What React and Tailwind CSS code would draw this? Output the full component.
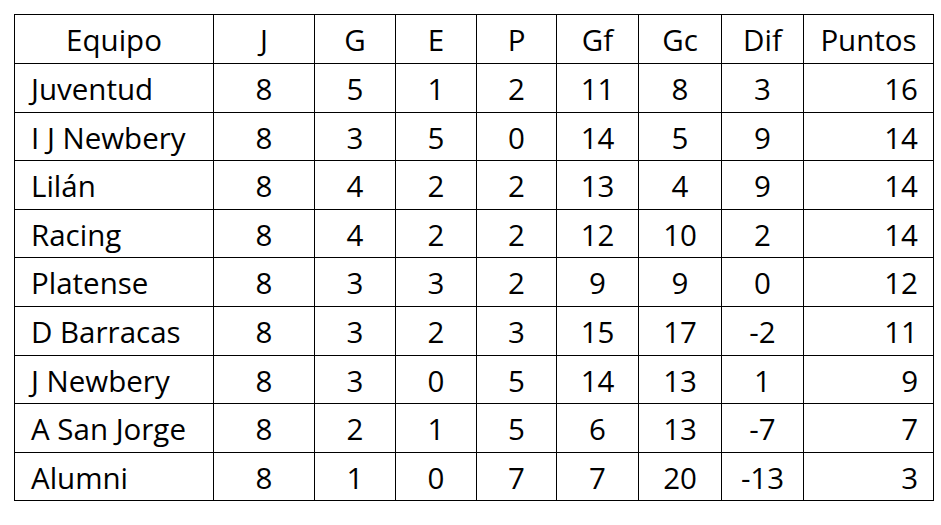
const COLS = [
  { key: 'equipo', label: 'Equipo', w: 'w-[199px]' },
  { key: 'j', label: 'J', w: 'w-[101px]' },
  { key: 'g', label: 'G', w: 'w-[81px]' },
  { key: 'e', label: 'E', w: 'w-[81px]' },
  { key: 'p', label: 'P', w: 'w-[80px]' },
  { key: 'gf', label: 'Gf', w: 'w-[82px]' },
  { key: 'gc', label: 'Gc', w: 'w-[83px]' },
  { key: 'dif', label: 'Dif', w: 'w-[82px]' },
  { key: 'pts', label: 'Puntos', w: 'w-[130px]' },
]

const ROWS = [
  ['Juventud', 8, 5, 1, 2, 11, 8, 3, 16],
  ['I J Newbery', 8, 3, 5, 0, 14, 5, 9, 14],
  ['Lilán', 8, 4, 2, 2, 13, 4, 9, 14],
  ['Racing', 8, 4, 2, 2, 12, 10, 2, 14],
  ['Platense', 8, 3, 3, 2, 9, 9, 0, 12],
  ['D Barracas', 8, 3, 2, 3, 15, 17, -2, 11],
  ['J Newbery', 8, 3, 0, 5, 14, 13, 1, 9],
  ['A San Jorge', 8, 2, 1, 5, 6, 13, -7, 7],
  ['Alumni', 8, 1, 0, 7, 7, 20, -13, 3],
]

export default function App() {
  return (
    <div className="w-[941px] h-[525px] bg-white pt-[14px] pl-[14px]">
      <table className="border-collapse table-fixed text-black text-[29.5px] leading-none" style={{ fontFamily: '"Open Sans", Lato, sans-serif' }}>
        <thead>
          <tr className="h-[49px]">
            {COLS.map((c) => (
              <th key={c.key} className={`${c.w} border border-black font-normal text-center p-0 pt-[2px]`}>
                {c.label}
              </th>
            ))}
          </tr>
        </thead>
        <tbody>
          {ROWS.map((r) => (
            <tr key={r[0]} className="h-[48.6px]">
              {r.map((v, i) => (
                <td
                  key={i}
                  className={`border border-black p-0 pt-[2px] ${
                    i === 0 ? 'text-left pl-[16px]' : i === 8 ? 'text-right pr-[15px]' : 'text-center'
                  }`}
                >
                  {v}
                </td>
              ))}
            </tr>
          ))}
        </tbody>
      </table>
    </div>
  )
}
